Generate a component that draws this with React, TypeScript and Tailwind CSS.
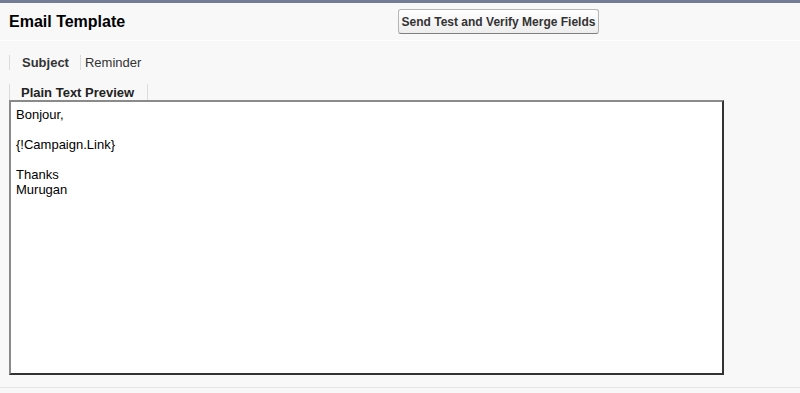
import React from "react";

const body = `Bonjour,

{!Campaign.Link}

Thanks
Murugan`;

export default function App() {
  return (
    <div className="min-h-[393px] bg-[#f8f8f8] font-['Liberation_Sans',Arial,sans-serif] text-[#000]">
      <div className="h-[3px] bg-[#747d96]" />
      <div className="flex items-center h-[38px] border-b border-white pl-[9px]">
        <h2 className="w-[389px] text-[16px] font-bold text-black">
          Email Template
        </h2>
        <button
          type="button"
          className="h-[25px] w-[201px] rounded-[3px] border border-[#b5b5b5] border-b-[#7f7f7f] bg-gradient-to-b from-white to-[#ededed] text-[12px] font-bold text-[#333]"
        >
          Send Test and Verify Merge Fields
        </button>
      </div>

      <div className="pl-[9px] pt-[14px]">
        <div className="flex items-center h-[15px] text-[13px]">
          <span className="h-full border-l border-[#dcdcdc] pl-[12px] pr-[11px] font-bold text-[#333] flex items-center">
            Subject
          </span>
          <span className="h-full border-l border-[#dcdcdc] pl-[4px] text-[#333] flex items-center">
            Reminder
          </span>
        </div>

        <div className="mt-[14px] flex">
          <div className="h-[16px] w-[139px] border-l border-r border-[#dcdcdc] pl-[11px] text-[13px] font-bold leading-[17px] text-[#222]">
            Plain Text Preview
          </div>
        </div>

        <div className="w-[715px] h-[275px] border-2 border-t-[#8a8a8a] border-l-[#8a8a8a] border-r-[#333] border-b-[#333] bg-white px-[5px] pt-[5px] text-[13px] leading-[15px] whitespace-pre text-black">
          {body}
        </div>
      </div>

      <div className="mt-[12px] border-t border-[#e6e6e6]" />
    </div>
  );
}
